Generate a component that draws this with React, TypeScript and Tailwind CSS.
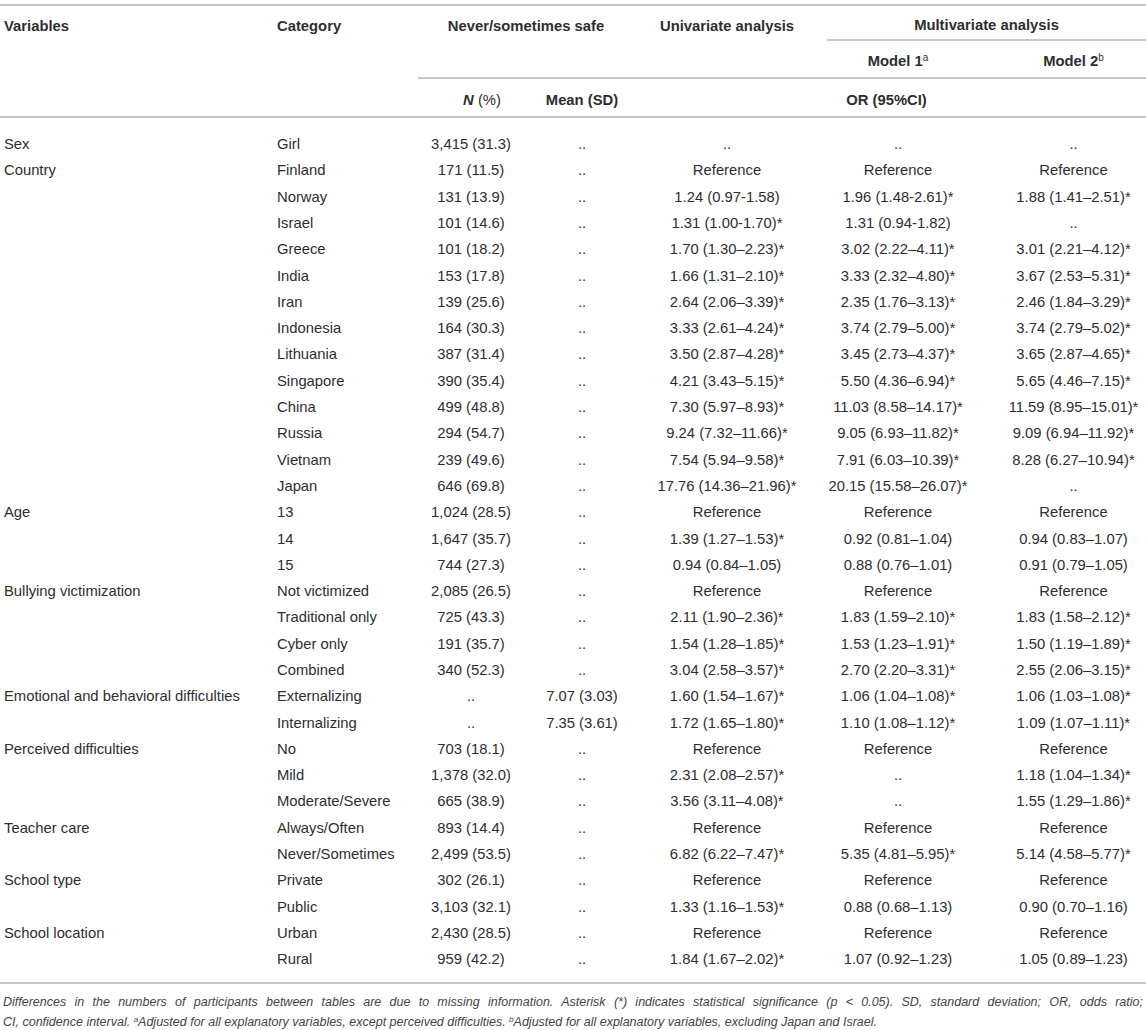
import React from "react";

type Row = [string, string, string, string, string, string, string];

const rows: Row[] = [
  ["Sex", "Girl", "3,415 (31.3)", "..", "..", "..", ".."],
  ["Country", "Finland", "171 (11.5)", "..", "Reference", "Reference", "Reference"],
  ["", "Norway", "131 (13.9)", "..", "1.24 (0.97-1.58)", "1.96 (1.48-2.61)*", "1.88 (1.41–2.51)*"],
  ["", "Israel", "101 (14.6)", "..", "1.31 (1.00-1.70)*", "1.31 (0.94-1.82)", ".."],
  ["", "Greece", "101 (18.2)", "..", "1.70 (1.30–2.23)*", "3.02 (2.22–4.11)*", "3.01 (2.21–4.12)*"],
  ["", "India", "153 (17.8)", "..", "1.66 (1.31–2.10)*", "3.33 (2.32–4.80)*", "3.67 (2.53–5.31)*"],
  ["", "Iran", "139 (25.6)", "..", "2.64 (2.06–3.39)*", "2.35 (1.76–3.13)*", "2.46 (1.84–3.29)*"],
  ["", "Indonesia", "164 (30.3)", "..", "3.33 (2.61–4.24)*", "3.74 (2.79–5.00)*", "3.74 (2.79–5.02)*"],
  ["", "Lithuania", "387 (31.4)", "..", "3.50 (2.87–4.28)*", "3.45 (2.73–4.37)*", "3.65 (2.87–4.65)*"],
  ["", "Singapore", "390 (35.4)", "..", "4.21 (3.43–5.15)*", "5.50 (4.36–6.94)*", "5.65 (4.46–7.15)*"],
  ["", "China", "499 (48.8)", "..", "7.30 (5.97–8.93)*", "11.03 (8.58–14.17)*", "11.59 (8.95–15.01)*"],
  ["", "Russia", "294 (54.7)", "..", "9.24 (7.32–11.66)*", "9.05 (6.93–11.82)*", "9.09 (6.94–11.92)*"],
  ["", "Vietnam", "239 (49.6)", "..", "7.54 (5.94–9.58)*", "7.91 (6.03–10.39)*", "8.28 (6.27–10.94)*"],
  ["", "Japan", "646 (69.8)", "..", "17.76 (14.36–21.96)*", "20.15 (15.58–26.07)*", ".."],
  ["Age", "13", "1,024 (28.5)", "..", "Reference", "Reference", "Reference"],
  ["", "14", "1,647 (35.7)", "..", "1.39 (1.27–1.53)*", "0.92 (0.81–1.04)", "0.94 (0.83–1.07)"],
  ["", "15", "744 (27.3)", "..", "0.94 (0.84–1.05)", "0.88 (0.76–1.01)", "0.91 (0.79–1.05)"],
  ["Bullying victimization", "Not victimized", "2,085 (26.5)", "..", "Reference", "Reference", "Reference"],
  ["", "Traditional only", "725 (43.3)", "..", "2.11 (1.90–2.36)*", "1.83 (1.59–2.10)*", "1.83 (1.58–2.12)*"],
  ["", "Cyber only", "191 (35.7)", "..", "1.54 (1.28–1.85)*", "1.53 (1.23–1.91)*", "1.50 (1.19–1.89)*"],
  ["", "Combined", "340 (52.3)", "..", "3.04 (2.58–3.57)*", "2.70 (2.20–3.31)*", "2.55 (2.06–3.15)*"],
  ["Emotional and behavioral difficulties", "Externalizing", "..", "7.07 (3.03)", "1.60 (1.54–1.67)*", "1.06 (1.04–1.08)*", "1.06 (1.03–1.08)*"],
  ["", "Internalizing", "..", "7.35 (3.61)", "1.72 (1.65–1.80)*", "1.10 (1.08–1.12)*", "1.09 (1.07–1.11)*"],
  ["Perceived difficulties", "No", "703 (18.1)", "..", "Reference", "Reference", "Reference"],
  ["", "Mild", "1,378 (32.0)", "..", "2.31 (2.08–2.57)*", "..", "1.18 (1.04–1.34)*"],
  ["", "Moderate/Severe", "665 (38.9)", "..", "3.56 (3.11–4.08)*", "..", "1.55 (1.29–1.86)*"],
  ["Teacher care", "Always/Often", "893 (14.4)", "..", "Reference", "Reference", "Reference"],
  ["", "Never/Sometimes", "2,499 (53.5)", "..", "6.82 (6.22–7.47)*", "5.35 (4.81–5.95)*", "5.14 (4.58–5.77)*"],
  ["School type", "Private", "302 (26.1)", "..", "Reference", "Reference", "Reference"],
  ["", "Public", "3,103 (32.1)", "..", "1.33 (1.16–1.53)*", "0.88 (0.68–1.13)", "0.90 (0.70–1.16)"],
  ["School location", "Urban", "2,430 (28.5)", "..", "Reference", "Reference", "Reference"],
  ["", "Rural", "959 (42.2)", "..", "1.84 (1.67–2.02)*", "1.07 (0.92–1.23)", "1.05 (0.89–1.23)"],
];

const cols = "grid grid-cols-[273px_132px_132px_90px_200px_142px_177px]";

export default function App() {
  return (
    <div className="w-[1146px] bg-white font-['Liberation_Sans',Arial,sans-serif] text-[14.8px] text-[#2e2e2e]">
      <div className="mt-[4px] border-t-2 border-[#c6c6c6]">
        {/* header row 1 */}
        <div className={`${cols} h-[35px] items-center pt-[5px] font-bold`}>
          <div className="pl-[4px]">Variables</div>
          <div className="pl-[4px]">Category</div>
          <div className="col-span-2 pl-[20px] text-center">Never/sometimes safe</div>
          <div className="text-center">Univariate analysis</div>
          <div className="col-span-2 -mt-[5px] flex h-[35px] items-center justify-center border-b-2 border-[#c6c6c6] pt-[5px]">
            Multivariate analysis
          </div>
        </div>
        {/* header row 2 */}
        <div className={`${cols} h-[36px] items-center pt-[5px] font-bold`}>
          <div className="col-span-5" />
          <div className="text-center">
            Model 1<sup className="text-[10px] font-normal">a</sup>
          </div>
          <div className="pl-[32px] text-center">
            Model 2<sup className="text-[10px] font-normal">b</sup>
          </div>
        </div>
        <div className="ml-[418px] border-t-2 border-[#c6c6c6]" />
        {/* header row 3 */}
        <div className={`${cols} h-[39px] items-center border-b-2 border-[#c6c6c6] pt-[5px] font-bold`}>
          <div className="col-span-2" />
          <div className="pl-[22px] text-center">
            <i>N</i> <span className="font-normal">(%)</span>
          </div>
          <div className="text-center">Mean (SD)</div>
          <div className="col-span-3 text-center">OR (95%CI)</div>
        </div>
      </div>

      <div className="border-b-2 border-[#c6c6c6] pt-[13px] pb-[9px]">
        {rows.map((r, i) => (
          <div key={i} className={`${cols} h-[26.3px] items-center`}>
            <div className="pl-[4px] whitespace-nowrap">{r[0]}</div>
            <div className="pl-[4px] whitespace-nowrap">{r[1]}</div>
            <div className="text-center">{r[2]}</div>
            <div className="text-center">{r[3]}</div>
            <div className="text-center">{r[4]}</div>
            <div className="text-center">{r[5]}</div>
            <div className="pl-[32px] text-center">{r[6]}</div>
          </div>
        ))}
      </div>

      <div className="px-[3px] pt-[8px] text-[12.5px] italic leading-[20px] text-[#444]">
        <p className="text-justify [text-align-last:justify]">
          Differences in the numbers of participants between tables are due to missing information. Asterisk (*)
          indicates statistical significance (p &lt; 0.05). SD, standard deviation; OR, odds ratio;
        </p>
        <p>
          CI, confidence interval. <sup className="text-[8px]">a</sup>Adjusted for all explanatory variables, except
          perceived difficulties. <sup className="text-[8px]">b</sup>Adjusted for all explanatory variables, excluding
          Japan and Israel.
        </p>
      </div>
    </div>
  );
}
